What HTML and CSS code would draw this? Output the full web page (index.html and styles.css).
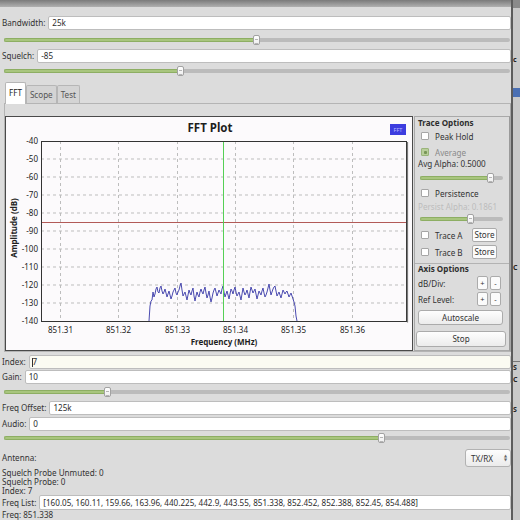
FILE: index.html
```html
<!DOCTYPE html>
<html>
<head>
<meta charset="utf-8">
<title>FFT</title>
<link rel="stylesheet" href="styles.css">
</head>
<body>
<div class="screen">
  <div class="win">
    <div class="titlebar"></div>

    <div class="row r-bw"><span class="lbl">Bandwidth:</span><div class="entry">25k</div></div>
    <div class="slider s-bw"><div class="fill" style="width:249px"></div><div class="handle"></div><div class="rest"></div></div>

    <div class="row r-sq"><span class="lbl">Squelch:</span><div class="entry">-85</div></div>
    <div class="slider s-sq"><div class="fill" style="width:173px"></div><div class="handle"></div><div class="rest"></div></div>

    <div class="tabs">
      <div class="tab active">FFT</div>
      <div class="tab">Scope</div>
      <div class="tab">Test</div>
    </div>

    <div class="pane">
      <div class="plot">
        <svg width="406" height="233" viewBox="0 0 406 233">
          <text class="ptitle" x="204" y="15" text-anchor="middle">FFT Plot</text>
          <rect x="384" y="7" width="16" height="11" fill="#3d3ddf"/>
          <text class="legend" x="392" y="14.6" text-anchor="middle">FFT</text>
          <g class="grid">
            <line x1="35" x2="400" y1="42" y2="42"/>
            <line x1="35" x2="400" y1="60" y2="60"/>
            <line x1="35" x2="400" y1="78" y2="78"/>
            <line x1="35" x2="400" y1="96" y2="96"/>
            <line x1="35" x2="400" y1="114" y2="114"/>
            <line x1="35" x2="400" y1="132" y2="132"/>
            <line x1="35" x2="400" y1="150" y2="150"/>
            <line x1="35" x2="400" y1="168" y2="168"/>
            <line x1="35" x2="400" y1="186" y2="186"/>
            <line x1="54.5" x2="54.5" y1="24" y2="204"/>
            <line x1="112.5" x2="112.5" y1="24" y2="204"/>
            <line x1="171.5" x2="171.5" y1="24" y2="204"/>
            <line x1="229.5" x2="229.5" y1="24" y2="204"/>
            <line x1="287.5" x2="287.5" y1="24" y2="204"/>
            <line x1="346.5" x2="346.5" y1="24" y2="204"/>
          </g>
          <line class="ref" x1="35" x2="400" y1="105.5" y2="105.5"/>
          <g transform="translate(-1,-1)">
            <polyline class="trace" points="144,205 145,190 146,185 147,184 148,176 149,181 150,178 151,173 152,171 153,176 154,177 155,172 156,170 157,175 158,178 159,176 160,173 161,177 162,181 163,178 164,175 165,179 166,183 167,180 168,176 169,174 170,172 171,177 172,179 173,176 174,174 175,170 176,167 177,174 178,180 179,178 180,176 181,180 182,184 183,179 184,174 185,177 186,179 187,175 188,172 189,180 190,185 191,180 192,176 193,179 194,181 195,176 196,173 197,176 198,178 199,174 200,171 201,177 202,182 203,179 204,175 205,181 206,186 207,182 208,177 209,174 210,172 211,176 212,180 213,177 214,174 215,176 216,178 217,173 218,170 219,176 220,181 221,178 222,175 223,179 224,183 225,178 226,173 227,175 228,178 229,174 230,171 231,176 232,180 233,178 234,176 235,180 236,184 237,178 238,172 239,176 240,179 241,177 242,174 243,178 244,182 245,176 246,171 247,174 248,177 249,175 250,173 251,178 252,183 253,179 254,175 255,177 256,179 257,175 258,172 259,177 260,181 261,179 262,176 263,172 264,168 265,174 266,179 267,176 268,173 269,171 270,170 271,175 272,180 273,178 274,176 275,179 276,182 277,178 278,174 279,176 280,178 281,176 282,175 283,178 284,181 285,179 286,177 287,180 288,183 289,186 290,190 291,200 292,205"/>
          </g>
          <line class="cline" x1="217.5" x2="217.5" y1="24" y2="204"/>
          <rect class="frame" x="35.5" y="24.5" width="365" height="180"/>
          <line class="shadow" x1="401.5" x2="401.5" y1="25" y2="205.5"/>
          <g class="ytick">
            <text x="32" y="27">-40</text>
            <text x="32" y="45">-50</text>
            <text x="32" y="63">-60</text>
            <text x="32" y="81">-70</text>
            <text x="32" y="99">-80</text>
            <text x="32" y="117">-90</text>
            <text x="32" y="135">-100</text>
            <text x="32" y="153">-110</text>
            <text x="32" y="171">-120</text>
            <text x="32" y="189">-130</text>
            <text x="32" y="207">-140</text>
          </g>
          <g class="xtick">
            <text x="54.5" y="216">851.31</text>
            <text x="112.5" y="216">851.32</text>
            <text x="171.5" y="216">851.33</text>
            <text x="229.5" y="216">851.34</text>
            <text x="287.5" y="216">851.35</text>
            <text x="346.5" y="216">851.36</text>
          </g>
          <text class="axis" x="218" y="228" text-anchor="middle">Frequency (MHz)</text>
          <text class="axis" transform="translate(11,111) rotate(-90)" text-anchor="middle">Amplitude (dB)</text>
        </svg>
      </div>

      <div class="side">
        <div class="grp-title t-trace">Trace Options</div>
        <div class="cbrow c-peak"><span class="cb"></span><span>Peak Hold</span></div>
        <div class="cbrow c-avg"><span class="cb on"></span><span class="dim">Average</span></div>
        <div class="stext t-avg">Avg Alpha: 0.5000</div>
        <div class="slider s-side s-avg"><div class="fill" style="width:67px"></div><div class="handle"></div><div class="rest"></div></div>
        <div class="cbrow c-pers"><span class="cb"></span><span>Persistence</span></div>
        <div class="stext t-pers faint">Persist Alpha: 0.1861</div>
        <div class="slider s-side s-pers"><div class="fill" style="width:47px"></div><div class="handle"></div><div class="rest"></div></div>
        <div class="btnrow b-ta"><span class="cb"></span><span>Trace A</span><span class="btn store">Store</span></div>
        <div class="btnrow b-tb"><span class="cb"></span><span>Trace B</span><span class="btn store">Store</span></div>
        <div class="sep"></div>
        <div class="grp-title t-axis">Axis Options</div>
        <div class="axrow a-db"><span>dB/Div:</span><span class="pms"><span class="btn pm">+</span><span class="btn pm">-</span></span></div>
        <div class="axrow a-ref"><span>Ref Level:</span><span class="pms"><span class="btn pm">+</span><span class="btn pm">-</span></span></div>
        <div class="btn autoscale">Autoscale</div>
        <div class="btn stop">Stop</div>
      </div>
    </div>

    <div class="row r-idx"><span class="lbl">Index:</span><div class="entry focus"><span class="caret"></span>7</div></div>
    <div class="row r-gain"><span class="lbl">Gain:</span><div class="entry">10</div></div>
    <div class="slider s-gain"><div class="fill" style="width:100px"></div><div class="handle"></div><div class="rest"></div></div>
    <div class="row r-off"><span class="lbl">Freq Offset:</span><div class="entry">125k</div></div>
    <div class="row r-aud"><span class="lbl">Audio:</span><div class="entry">0</div></div>
    <div class="slider s-aud"><div class="fill" style="width:374px"></div><div class="handle"></div><div class="rest"></div></div>

    <div class="r-ant">
      <span class="lbl">Antenna:</span>
      <div class="combo"><span>TX/RX</span><span class="arrows"><span>▲</span><span>▼</span></span></div>
    </div>

    <div class="info i-first">Squelch Probe Unmuted: 0</div>
    <div class="info">Squelch Probe: 0</div>
    <div class="info">Index: 7</div>
    <div class="row r-list"><span class="lbl">Freq List:</span><div class="entry">[160.05, 160.11, 159.66, 163.96, 440.225, 442.9, 443.55, 851.338, 852.452, 852.388, 852.45, 854.488]</div></div>
    <div class="info">Freq: 851.338</div>
  </div>

  <div class="other">
    <div class="o-top"></div>
    <div class="frag f-c">c</div>
    <div class="o-blue"></div>
    <div class="frag f-co1">C</div>
    <div class="o-line"></div>
    <div class="frag f-se">S</div>
    <div class="frag f-co2">C</div>
    <div class="frag f-sa">S</div>
  </div>
</div>
</body>
</html>
```

FILE: styles.css
```css
* { box-sizing: border-box; }
html, body { margin: 0; padding: 0; }
body {
  width: 520px;
  height: 520px;
  overflow: hidden;
  background: #dcdcdc;
  font-family: "Noto Sans", "Open Sans", sans-serif;
  font-size: 8.1px;
  color: #333;
}
.screen { display: flex; width: 520px; height: 520px; }

.win {
  width: 511px;
  flex: none;
  display: flex;
  flex-direction: column;
  background: #dcdcdc;
}
.titlebar {
  height: 7px;
  flex: none;
  background: linear-gradient(#7b7b7b, #b0b0b0);
}

/* label + entry rows */
.row {
  display: flex;
  align-items: center;
  gap: 3px;
  padding-left: 2px;
  height: 14px;
  flex: none;
}
.lbl { white-space: nowrap; line-height: 10px; }
.entry {
  flex: 1;
  height: 100%;
  background: #fff;
  border: 1px solid #bdbdbd;
  border-radius: 2px;
  padding-left: 3px;
  line-height: 12px;
  white-space: nowrap;
  overflow: hidden;
  color: #2c2c2c;
  display: flex;
  align-items: center;
}
.entry.focus { background: #fbfbf2; padding-left: 2px; }
.caret { display: block; width: 1px; height: 9px; background: #333; }

.r-bw { margin-top: 9px; }
.r-sq { margin-top: 4px; }
.r-idx { margin-top: 3px; }
.r-gain { margin-top: 1px; }
.r-off { margin-top: 4px; }
.r-aud { margin-top: 2px; }
.r-list { height: 15px; }

/* sliders */
.slider {
  display: flex;
  align-items: center;
  height: 10px;
  margin: 0 1px 0 4px;
  flex: none;
}
.fill {
  height: 4px;
  background: #a8c57e;
  border: 1px solid #8dae63;
  border-right: none;
  border-radius: 2px 0 0 2px;
  flex: none;
}
.rest {
  flex: 1;
  height: 4px;
  background: #bbbbbb;
  border-radius: 0 2px 2px 0;
}
.handle {
  width: 7px;
  height: 10px;
  flex: none;
  background: linear-gradient(#ffffff, #eeeeee);
  border: 1px solid #a2a2a2;
  border-radius: 2px;
}
.handle::after {
  content: "";
  display: block;
  width: 3px;
  height: 3px;
  margin: 2.5px auto 0;
  border-top: 1px solid #b5b5b5;
  border-bottom: 1px solid #b5b5b5;
}
.s-bw { margin-top: 5px; }
.s-sq { margin-top: 3px; }
.s-gain { margin-top: 3px; }
.s-aud { margin-top: 2px; }

/* tabs */
.tabs {
  display: flex;
  align-items: flex-end;
  padding-left: 5px;
  margin-top: 6px;
  height: 22px;
  flex: none;
}
.tab {
  height: 19px;
  padding: 0 3px;
  border: 1px solid #b6b6b6;
  border-bottom: none;
  background: #d4d4d4;
  line-height: 18px;
  color: #555;
  border-radius: 2px 2px 0 0;
}
.tab.active {
  height: 22px;
  background: #ffffff;
  color: #222;
  line-height: 20px;
  position: relative;
  z-index: 1;
}

/* notebook pane */
.pane {
  margin: -1px 0 0 4px;
  height: 249px;
  border: 1px solid #b4b4b4;
  border-right-color: #a5a5a5;
  background: #dcdcdc;
  padding-top: 12px;
  display: flex;
  flex: none;
}
.plot {
  width: 408px;
  height: 235px;
  flex: none;
  border: 1px solid #4a4a4a;
  background: #fcfafc;
}
.plot svg { display: block; font-family: "Noto Sans", "Open Sans", sans-serif; }
.ptitle { font-size: 11.5px; font-weight: bold; fill: #1e1e1e; }
.legend { font-size: 5.5px; fill: #b9b9ff; }
.grid line { stroke: #bdbdbd; stroke-width: 1; stroke-dasharray: 3 3; }
.ref { stroke: #b25a57; stroke-width: 1; }
.cline { stroke: #55d055; stroke-width: 1; }
.trace { fill: none; stroke: #4b4bb0; stroke-width: 1; }
.frame { fill: none; stroke: #333; stroke-width: 1; }
.shadow { stroke: #7a7a7a; stroke-width: 1.2; }
.ytick text { font-size: 8px; fill: #222; text-anchor: end; }
.xtick text { font-size: 8px; fill: #222; text-anchor: middle; }
.axis { font-size: 8px; font-weight: bold; fill: #1e1e1e; }

/* side panel */
.side {
  width: 96px;
  height: 235px;
  flex: none;
  margin-left: 1px;
  border: 1px solid #a9a9a9;
  border-right-color: #9a9a9a;
  padding: 0 3px 0 1px;
  display: flex;
  flex-direction: column;
}
.grp-title { font-weight: bold; line-height: 10px; margin-left: 2px; color: #2e2e2e; }
.t-trace { margin-top: 1px; }
.t-axis { margin-top: 0; }
.cbrow {
  display: flex;
  align-items: center;
  gap: 6px;
  height: 12px;
  padding-left: 5px;
  flex: none;
}
.cb {
  width: 8px;
  height: 8px;
  flex: none;
  border: 1px solid #a6a6a6;
  background: #fff;
  border-radius: 1px;
  display: flex;
  align-items: center;
  justify-content: center;
}
.cb.on { background: #b8ce9a; border-color: #9ab47a; }
.cb.on::after { content: ""; display: block; width: 3px; height: 3px; background: #789556; border-radius: 1px; }
.dim { color: #8a8a8a; }
.faint { color: #bcbcbc; }
.c-peak { margin-top: 2px; }
.c-avg { margin-top: 4px; }
.c-pers { margin-top: 4px; }
.stext { line-height: 10px; margin-left: 2px; white-space: nowrap; }
.t-avg { margin-top: 1px; }
.t-pers { margin-top: 3px; }
.s-side { margin: 0 3px 0 4px; }
.s-avg { margin-top: 4px; }
.s-pers { margin-top: 2px; }
.btnrow {
  display: flex;
  align-items: center;
  gap: 6px;
  height: 14px;
  padding-left: 5px;
  flex: none;
}
.b-ta { margin-top: 4px; }
.b-tb { margin-top: 3px; }
.btn {
  background: linear-gradient(#fefefe, #ececec);
  border: 1px solid #ababab;
  border-radius: 3px;
  display: flex;
  align-items: center;
  justify-content: center;
  color: #333;
  line-height: 10px;
}
.store { margin-left: auto; margin-right: 9px; height: 14px; width: 25px; border-radius: 2px; background: #fbfbfb; }
.sep { height: 1px; background: #b3b3b3; margin: 4px -3px 0 -1px; flex: none; }
.axrow {
  display: flex;
  align-items: center;
  justify-content: space-between;
  height: 14px;
  padding-left: 2px;
  margin-right: 5px;
  flex: none;
}
.a-db { margin-top: 2px; }
.a-ref { margin-top: 2px; }
.pms { display: flex; gap: 2px; }
.pm { width: 11px; height: 14px; border-radius: 2px; font-size: 7.5px; background: #fbfbfb; }
.autoscale { height: 15px; margin: 4px 3px 0 2px; flex: none; }
.stop { height: 16px; margin-top: 6px; flex: none; }

/* antenna + info */
.r-ant {
  display: flex;
  align-items: center;
  justify-content: space-between;
  height: 18px;
  margin-top: 6px;
  padding-left: 2px;
  flex: none;
}
.combo {
  width: 46px;
  height: 18px;
  display: flex;
  align-items: center;
  justify-content: space-between;
  padding: 0 3px 0 5px;
  background: linear-gradient(#fdfdfd, #ebebeb);
  border: 1px solid #b2b2b2;
  border-radius: 3px;
  color: #333;
}
.arrows {
  display: flex;
  flex-direction: column;
  font-family: "DejaVu Sans", sans-serif;
  font-size: 4px;
  line-height: 4px;
  color: #666;
}
.info { line-height: 9px; padding-left: 2px; flex: none; white-space: nowrap; }
.i-first { margin-top: 1px; }

/* other window strip at the right edge */
.other {
  width: 9px;
  flex: none;
  background: #c9c9c9;
  border-left: 2px solid #5c5c5c;
  overflow: hidden;
  display: flex;
  flex-direction: column;
}
.o-top { height: 8px; background: #8a8a8a; flex: none; }
.frag { font-weight: bold; line-height: 10px; color: #222; white-space: nowrap; font-size: 7px; flex: none; }
.f-c { margin-top: 47px; }
.o-blue { height: 9px; margin-top: 23px; background: #4a6fb3; flex: none; }
.f-co1 { margin-top: 166px; }
.o-line { height: 1px; background: #777; margin-top: 88px; flex: none; }
.f-se { margin-top: 1px; }
.f-co2 { margin-top: 2px; }
.f-sa { margin-top: 20px; }
```
